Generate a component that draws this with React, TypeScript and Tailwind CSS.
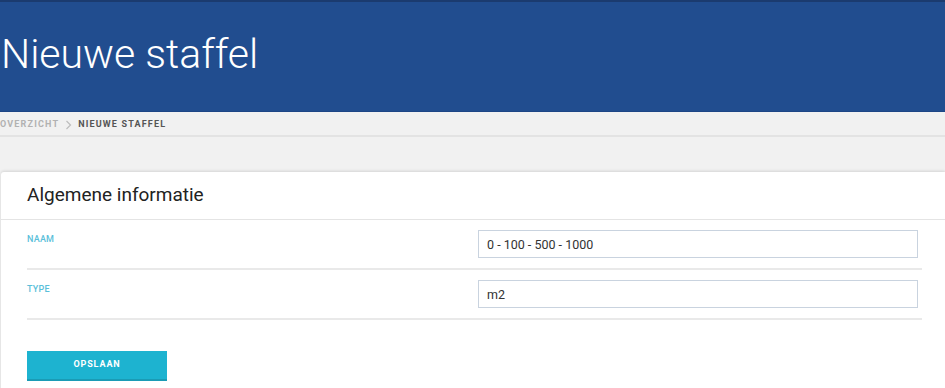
import React from 'react';

const Field = ({ label, value }: any) => (
  <div className="mx-[26px] w-[895px] flex border-b-2 border-[#e9e9e9]">
    <label className="w-[451px] pt-[13px] text-[9px] font-medium tracking-wide text-[#5bbfda] uppercase">{label}</label>
    <input
      readOnly
      value={value}
      className="w-[440px] h-[28px] my-[10px] px-[8px] border border-[#c9d3df] bg-white text-[12.5px] text-[#333] outline-none"
    />
  </div>
);

export default function App() {
  return (
    <div className="w-[945px] h-[388px] overflow-hidden bg-[#f1f1f1]" style={{ fontFamily: 'Roboto, "Liberation Sans", sans-serif' }}>
      <div className="h-[112px] bg-[#214d8f] border-t-2 border-[#1b3b6f] border-b border-b-[#1d4585] flex items-center pl-[1px]">
        <h1 className="text-[41px] font-light text-white leading-none -mt-[5px]">Nieuwe staffel</h1>
      </div>
      <div className="h-[25px] flex items-center gap-[6px] pt-[2px] text-[9px] font-bold tracking-[0.13em] border-b-2 border-[#e3e3e3]">
        <span className="text-[#b2b2b2]">OVERZICHT</span>
        <svg width="7" height="10" viewBox="0 0 7 10" className="text-[#bdbdbd]">
          <path d="M1.5 1 L5.5 5 L1.5 9" fill="none" stroke="currentColor" strokeWidth="1.2" />
        </svg>
        <span className="text-[#555]">NIEUWE STAFFEL</span>
      </div>
      <div className="h-[35px]" />
      <div className="ml-[1px] bg-white rounded-tl-[3px] shadow-[0_-1px_3px_rgba(0,0,0,0.12)] h-[300px]">
        <div className="h-[48px] flex items-center px-[26px] border-b border-[#e4e4e4]">
          <h2 className="text-[19px] text-[#222]">Algemene informatie</h2>
        </div>
        <Field label="Naam" value="0 - 100 - 500 - 1000" />
        <Field label="Type" value="m2" />
        <div className="px-[26px] pt-[30px]">
          <button className="w-[140px] h-[30px] bg-[#1db3d0] border-b-2 border-[#1a9bb5] text-white text-[9px] font-bold tracking-[0.1em]">
            OPSLAAN
          </button>
        </div>
      </div>
    </div>
  );
}
